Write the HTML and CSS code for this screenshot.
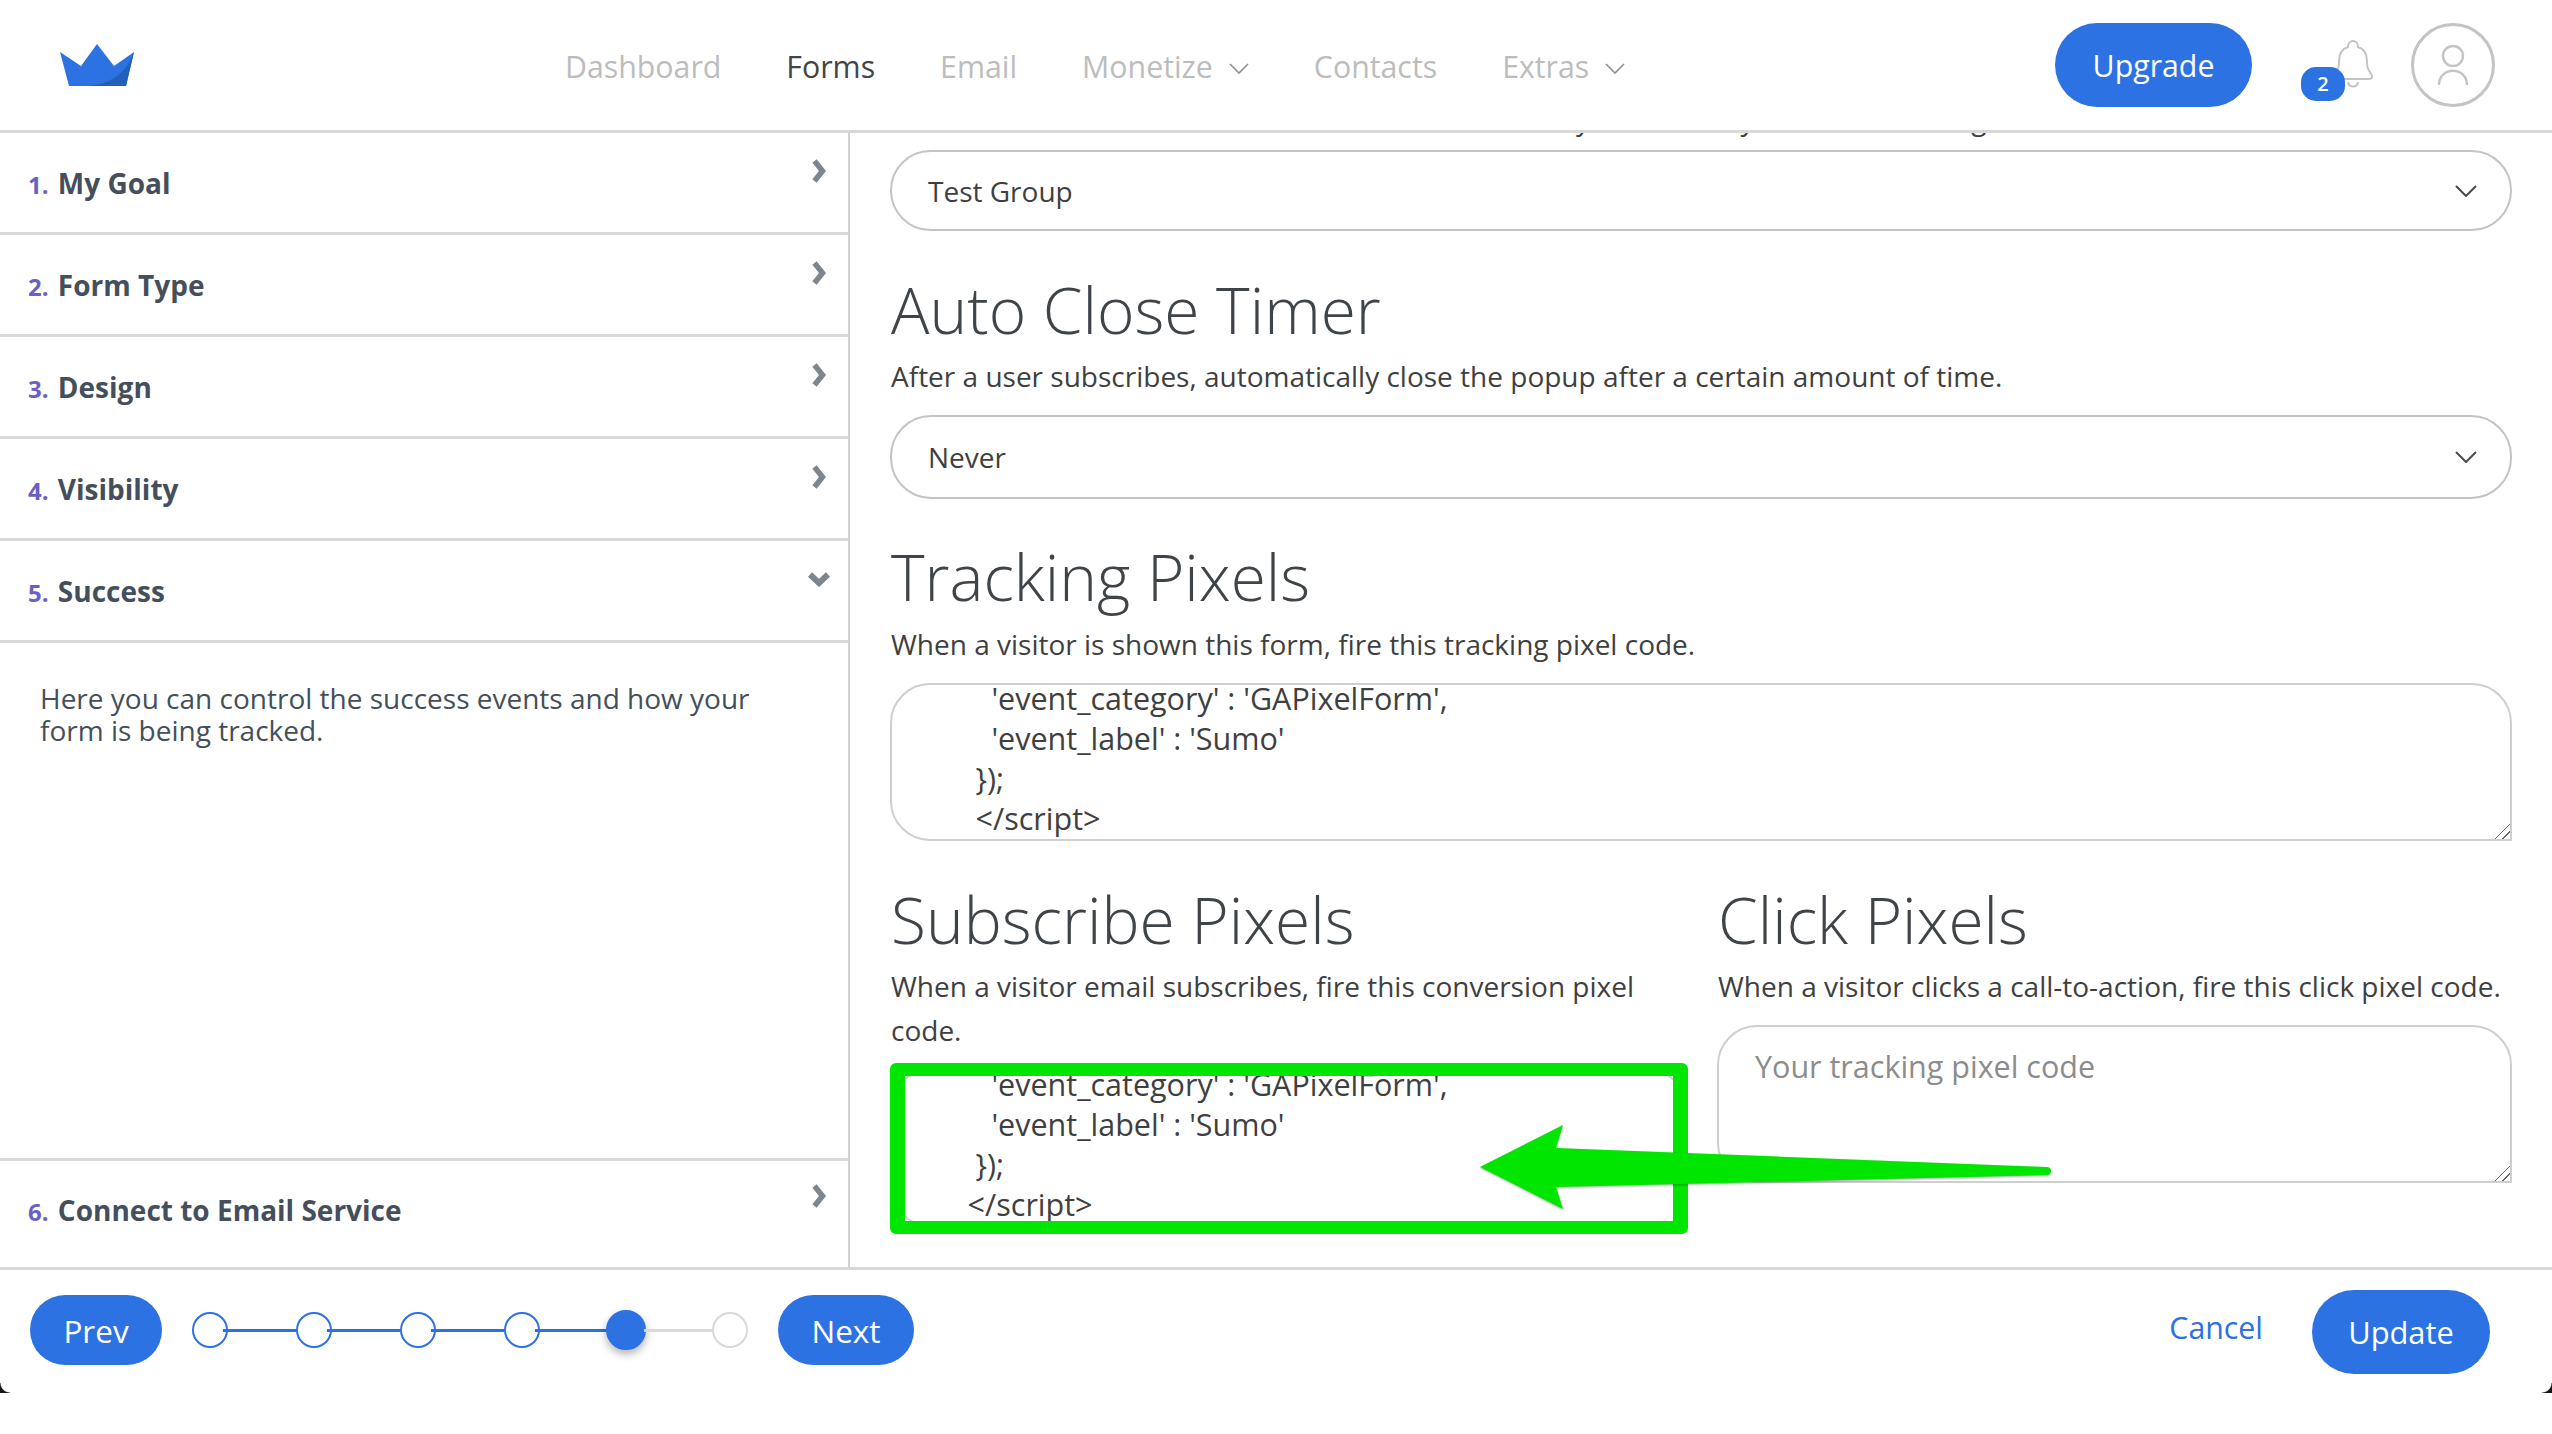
FILE: index.html
```html
<!DOCTYPE html>
<html lang="en">
<head>
<meta charset="utf-8">
<title>Form editor</title>
<link rel="stylesheet" href="styles.css">
</head>
<body>
<div class="app">
  <header class="topbar">
    <svg class="logo" viewBox="0 0 74 42" width="74" height="42"><path fill="#2d72e2" d="M0 8 L21 22 L37 0 L54 22 L74 8 L66 42 H9 Z"/><path fill="#2260bc" d="M28 42 C50 40 66 30 74 8 L66 42 Z"/></svg>
    <nav class="nav">
      <a class="nav-link">Dashboard</a>
      <a class="nav-link is-current">Forms</a>
      <a class="nav-link">Email</a>
      <a class="nav-link">Monetize<svg class="nav-caret" viewBox="0 0 20 12" width="20" height="12"><path d="M1 1 L10 10 L19 1" fill="none" stroke="#8f8f8f" stroke-width="1.6"/></svg></a>
      <a class="nav-link">Contacts</a>
      <a class="nav-link">Extras<svg class="nav-caret" viewBox="0 0 20 12" width="20" height="12"><path d="M1 1 L10 10 L19 1" fill="none" stroke="#8f8f8f" stroke-width="1.6"/></svg></a>
    </nav>
    <div class="top-actions">
      <button class="btn btn-upgrade">Upgrade</button>
      <div class="bell-wrap">
        <svg class="bell" viewBox="0 0 40 50" width="40" height="50" fill="none" stroke="#c4c4c4" stroke-width="2"><path d="M15 8 C15 0 25 0 25 8 C32 10 34 16 34 22 C34 29 35 30 38 35 C40 38 39 40 36 40 H4 C1 40 0 38 2 35 C5 30 6 29 6 22 C6 16 8 10 15 8 Z"/><path d="M15 43 C16 49 24 49 25 43"/></svg>
        <span class="badge">2</span>
      </div>
      <div class="avatar"><svg viewBox="0 0 34 46" width="34" height="46" fill="none" stroke="#c4c4c4" stroke-width="2.4"><circle cx="17" cy="14" r="10"/><path d="M3 43 C3 24 31 24 31 43"/></svg></div>
    </div>
  </header>
  <div class="workspace">
    <aside class="sidebar">
      <div class="step"><span class="step-title"><b class="step-num">1.</b> My Goal</span><svg class="chev" viewBox="0 0 16 24" width="16" height="24"><path d="M3.5 2 L11.5 12 L3.5 22" fill="none" stroke="#7d858f" stroke-width="5.5"/></svg></div>
      <div class="step"><span class="step-title"><b class="step-num">2.</b> Form Type</span><svg class="chev" viewBox="0 0 16 24" width="16" height="24"><path d="M3.5 2 L11.5 12 L3.5 22" fill="none" stroke="#7d858f" stroke-width="5.5"/></svg></div>
      <div class="step"><span class="step-title"><b class="step-num">3.</b> Design</span><svg class="chev" viewBox="0 0 16 24" width="16" height="24"><path d="M3.5 2 L11.5 12 L3.5 22" fill="none" stroke="#7d858f" stroke-width="5.5"/></svg></div>
      <div class="step"><span class="step-title"><b class="step-num">4.</b> Visibility</span><svg class="chev" viewBox="0 0 16 24" width="16" height="24"><path d="M3.5 2 L11.5 12 L3.5 22" fill="none" stroke="#7d858f" stroke-width="5.5"/></svg></div>
      <div class="step"><span class="step-title"><b class="step-num">5.</b> Success</span><svg class="chev chev-down" viewBox="0 0 24 16" width="24" height="16"><path d="M3 3.5 L12 12 L21 3.5" fill="none" stroke="#7d858f" stroke-width="6"/></svg></div>
      <div class="step-body">Here you can control the success events and how your form is being tracked.</div>
      <div class="step step-last"><span class="step-title"><b class="step-num">6.</b> Connect to Email Service</span><svg class="chev chev-last" viewBox="0 0 16 24" width="16" height="24"><path d="M3.5 2 L11.5 12 L3.5 22" fill="none" stroke="#7d858f" stroke-width="5.5"/></svg></div>
    </aside>
    <main class="main">
      <p class="clipped">After a visitor subscribes the contact will be set to any of these key lists and their tags.</p>
      <div class="select"><span>Test Group</span><svg viewBox="0 0 22 12" width="22" height="12"><path d="M1 1 L11 11 L21 1" fill="none" stroke="#4a4a4a" stroke-width="2"/></svg></div>
      <h2 class="section-title title-auto">Auto Close Timer</h2>
      <p class="hint hint-near">After a user subscribes, automatically close the popup after a certain amount of time.</p>
      <div class="select select-never"><span>Never</span><svg viewBox="0 0 22 12" width="22" height="12"><path d="M1 1 L11 11 L21 1" fill="none" stroke="#4a4a4a" stroke-width="2"/></svg></div>
      <h2 class="section-title title-track">Tracking Pixels</h2>
      <p class="hint hint-track">When a visitor is shown this form, fire this tracking pixel code.</p>
      <div class="code code-wide"><div class="code-lines">        'event_category' : 'GAPixelForm',
        'event_label' : 'Sumo'
      });
      &lt;/script&gt;</div></div>
      <div class="pair">
        <section class="pair-col">
          <h2 class="section-title">Subscribe Pixels</h2>
          <p class="hint hint-near">When a visitor email subscribes, fire this conversion pixel code.</p>
          <div class="code code-sub"><div class="code-lines">        'event_category' : 'GAPixelForm',
        'event_label' : 'Sumo'
      });
     &lt;/script&gt;</div></div>
        </section>
        <section class="pair-col pair-col-click">
          <h2 class="section-title">Click Pixels</h2>
          <p class="hint hint-near">When a visitor clicks a call-to-action, fire this click pixel code.</p>
          <textarea class="code-input" placeholder="Your tracking pixel code"></textarea>
        </section>
      </div>
    </main>
  </div>
  <footer class="footer">
    <button class="btn btn-nav">Prev</button>
    <div class="stepper">
      <span class="dot done"></span><span class="link done"></span>
      <span class="dot done"></span><span class="link done"></span>
      <span class="dot done"></span><span class="link done"></span>
      <span class="dot done"></span><span class="link done"></span>
      <span class="dot active"></span><span class="link"></span>
      <span class="dot"></span>
    </div>
    <button class="btn btn-nav btn-next">Next</button>
    <a class="cancel">Cancel</a>
    <button class="btn btn-update">Update</button>
  </footer>
</div>
<div class="highlight"></div>
<svg class="arrow" viewBox="0 0 572 86" width="572" height="86"><path fill="#00e600" d="M0 42 L83 0 L76 23 L566 42 Q571 42 571 46 Q571 50 566 50 L76 62 L83 84 Z"/></svg>
<span class="corner corner-l"></span>
<span class="corner corner-r"></span>
</body>
</html>
```
FILE: styles.css
```css
* { box-sizing: border-box; }
html, body { margin: 0; padding: 0; background: #fff; }
body { width: 2552px; height: 1434px; overflow: hidden; position: relative; font-family: "Open Sans", "Noto Sans", sans-serif; color: #3f3f3f; }
.app { display: flex; flex-direction: column; height: 1393px; }

.topbar { height: 133px; flex: none; display: flex; align-items: center; padding: 0 57px 0 60px; border-bottom: 3px solid #d9d9d9; position: relative; }
.logo { flex: none; margin-top: -1px; }
.nav { display: flex; gap: 65px; margin-left: 431px; font-size: 30.3px; margin-top: 2px; }
.nav-link { color: #bdbdbd; display: flex; align-items: center; }
.nav-link.is-current { color: #3f4448; }
.nav-caret { margin-left: 16px; margin-top: 6px; }
.top-actions { margin-left: auto; display: flex; align-items: center; }
.btn { border: 0; background: #2d72e2; color: #fff; font-family: inherit; border-radius: 44px; padding: 0; }
.btn-upgrade { width: 197px; height: 84px; font-size: 30.3px; }
.bell-wrap { width: 159px; height: 84px; position: relative; }
.bell { position: absolute; left: 81px; top: 16px; }
.badge { position: absolute; left: 49px; top: 44px; width: 44px; height: 34px; border-radius: 15px; background: #2d72e2; color: #fff; font-size: 20px; font-weight: 600; text-align: center; line-height: 34px; }
.avatar { width: 84px; height: 84px; border: 3px solid #c4c4c4; border-radius: 50%; display: flex; align-items: center; justify-content: center; }

.workspace { flex: 1; min-height: 0; display: flex; }
.sidebar { width: 850px; flex: none; border-right: 2px solid #d2d2d2; display: flex; flex-direction: column; }
.step { height: 102px; flex: none; display: flex; justify-content: space-between; align-items: flex-start; padding: 30px 18px 0 28px; border-bottom: 3px solid #d9d9d9; }
.step-title { font-weight: 700; font-size: 28px; color: #454f5b; line-height: 40px; }
.step-num { font-size: 24px; color: #6a5fc4; font-weight: 700; margin-right: 2px; }
.chev { margin-top: -4px; margin-right: 3px; }
.chev-down { margin-top: 0; margin-right: -1px; }
.chev-last { margin-top: -6px; }
.step-body { flex: 1; padding: 39px 90px 0 40px; font-size: 28px; line-height: 32px; color: #454f5b; }
.step-last { height: 109px; border-top: 3px solid #d9d9d9; border-bottom: 0; padding-top: 29px; }

.main { flex: 1; min-width: 0; padding: 0 40px; overflow: hidden; position: relative; }
.clipped { margin: -34px 0 0; height: 51px; padding-left: 1px; font-size: 28px; line-height: 40px; white-space: nowrap; }
.select { height: 81px; border: 2px solid #c4c4c4; border-radius: 41px; display: flex; justify-content: space-between; align-items: center; padding: 0 33px 0 36px; font-size: 28px; color: #3f3f3f; }
.select-never { height: 84px; margin-top: 17px; }
.section-title { font-weight: 300; font-size: 64px; line-height: 80px; margin: 0; padding-left: 1px; color: #3f4448; }
.title-auto { margin-top: 39px; }
.title-track { margin-top: 38px; }
.hint { margin: 0; padding-left: 1px; font-size: 28px; line-height: 44px; color: #3f3f3f; }
.hint-near { margin-top: 4px; }
.hint-track { margin-top: 5px; }
.code { border: 2px solid #cfcfcf; border-radius: 40px 40px 0 40px; padding: 0 36px; font-size: 30.5px; line-height: 40px; white-space: pre; overflow: hidden; resize: both; color: #3f3f3f; }
.code-lines { margin-top: -7px; }
.code-wide { height: 158px; margin-top: 17px; }
.pair { display: flex; gap: 29px; margin-top: 39px; }
.pair-col { flex: 0 0 798px; }
.pair-col-click { flex: 1; min-width: 0; }
.code-sub { height: 158px; margin-top: 17px; }
.code-input { display: block; width: 100%; height: 158px; border: 2px solid #cfcfcf; border-radius: 40px 40px 0 40px; padding: 19px 36px; font-family: inherit; font-size: 30.5px; line-height: 40px; margin-top: 17px; outline: 0; }
.code-input::placeholder { color: #8c8c8c; opacity: 1; }
.code::-webkit-resizer, .code-input::-webkit-resizer { background: linear-gradient(135deg, transparent 0 47%, #666 47% 53%, transparent 53% 72%, #666 72% 78%, transparent 78%); }

.footer { height: 126px; flex: none; display: flex; align-items: center; border-top: 3px solid #d9d9d9; padding: 0 62px 0 30px; position: relative; }
.btn-nav { width: 132px; height: 70px; font-size: 31.5px; border-radius: 36px; margin-top: -3px; }
.btn-next { width: 136px; }
.stepper { display: flex; align-items: center; margin: 0 30px; margin-top: -3px; }
.dot { width: 36px; height: 36px; border-radius: 50%; border: 2px solid #d9d9d9; background: #fff; flex: none; }
.dot.done { border-color: #2d72e2; }
.dot.active { width: 40px; height: 40px; background: #2d72e2; border-color: #2d72e2; box-shadow: 0 4px 8px rgba(0,0,0,.3); margin: 0 -2px; }
.link { width: 68px; height: 3px; background: #d9d9d9; flex: none; }
.link.done { width: 73px; margin-left: -5px; background: #2d72e2; }
.cancel { margin-left: auto; margin-right: 49px; font-size: 30.3px; color: #2d72e2; margin-top: -8px; }
.btn-update { width: 178px; height: 84px; font-size: 30.8px; }

.highlight { position: absolute; left: 890px; top: 1063px; width: 798px; height: 171px; border: solid #00e600; border-width: 13px 15px; border-radius: 6px; }
.arrow { position: absolute; left: 1480px; top: 1125px; filter: drop-shadow(0 1px 1px rgba(0,0,0,.35)); }
.corner { position: absolute; top: 1383px; width: 10px; height: 10px; }
.corner-l { left: 0; background: radial-gradient(circle at 100% 0, transparent 9px, #161616 10px); }
.corner-r { right: 0; background: radial-gradient(circle at 0 0, transparent 9px, #161616 10px); }
```
